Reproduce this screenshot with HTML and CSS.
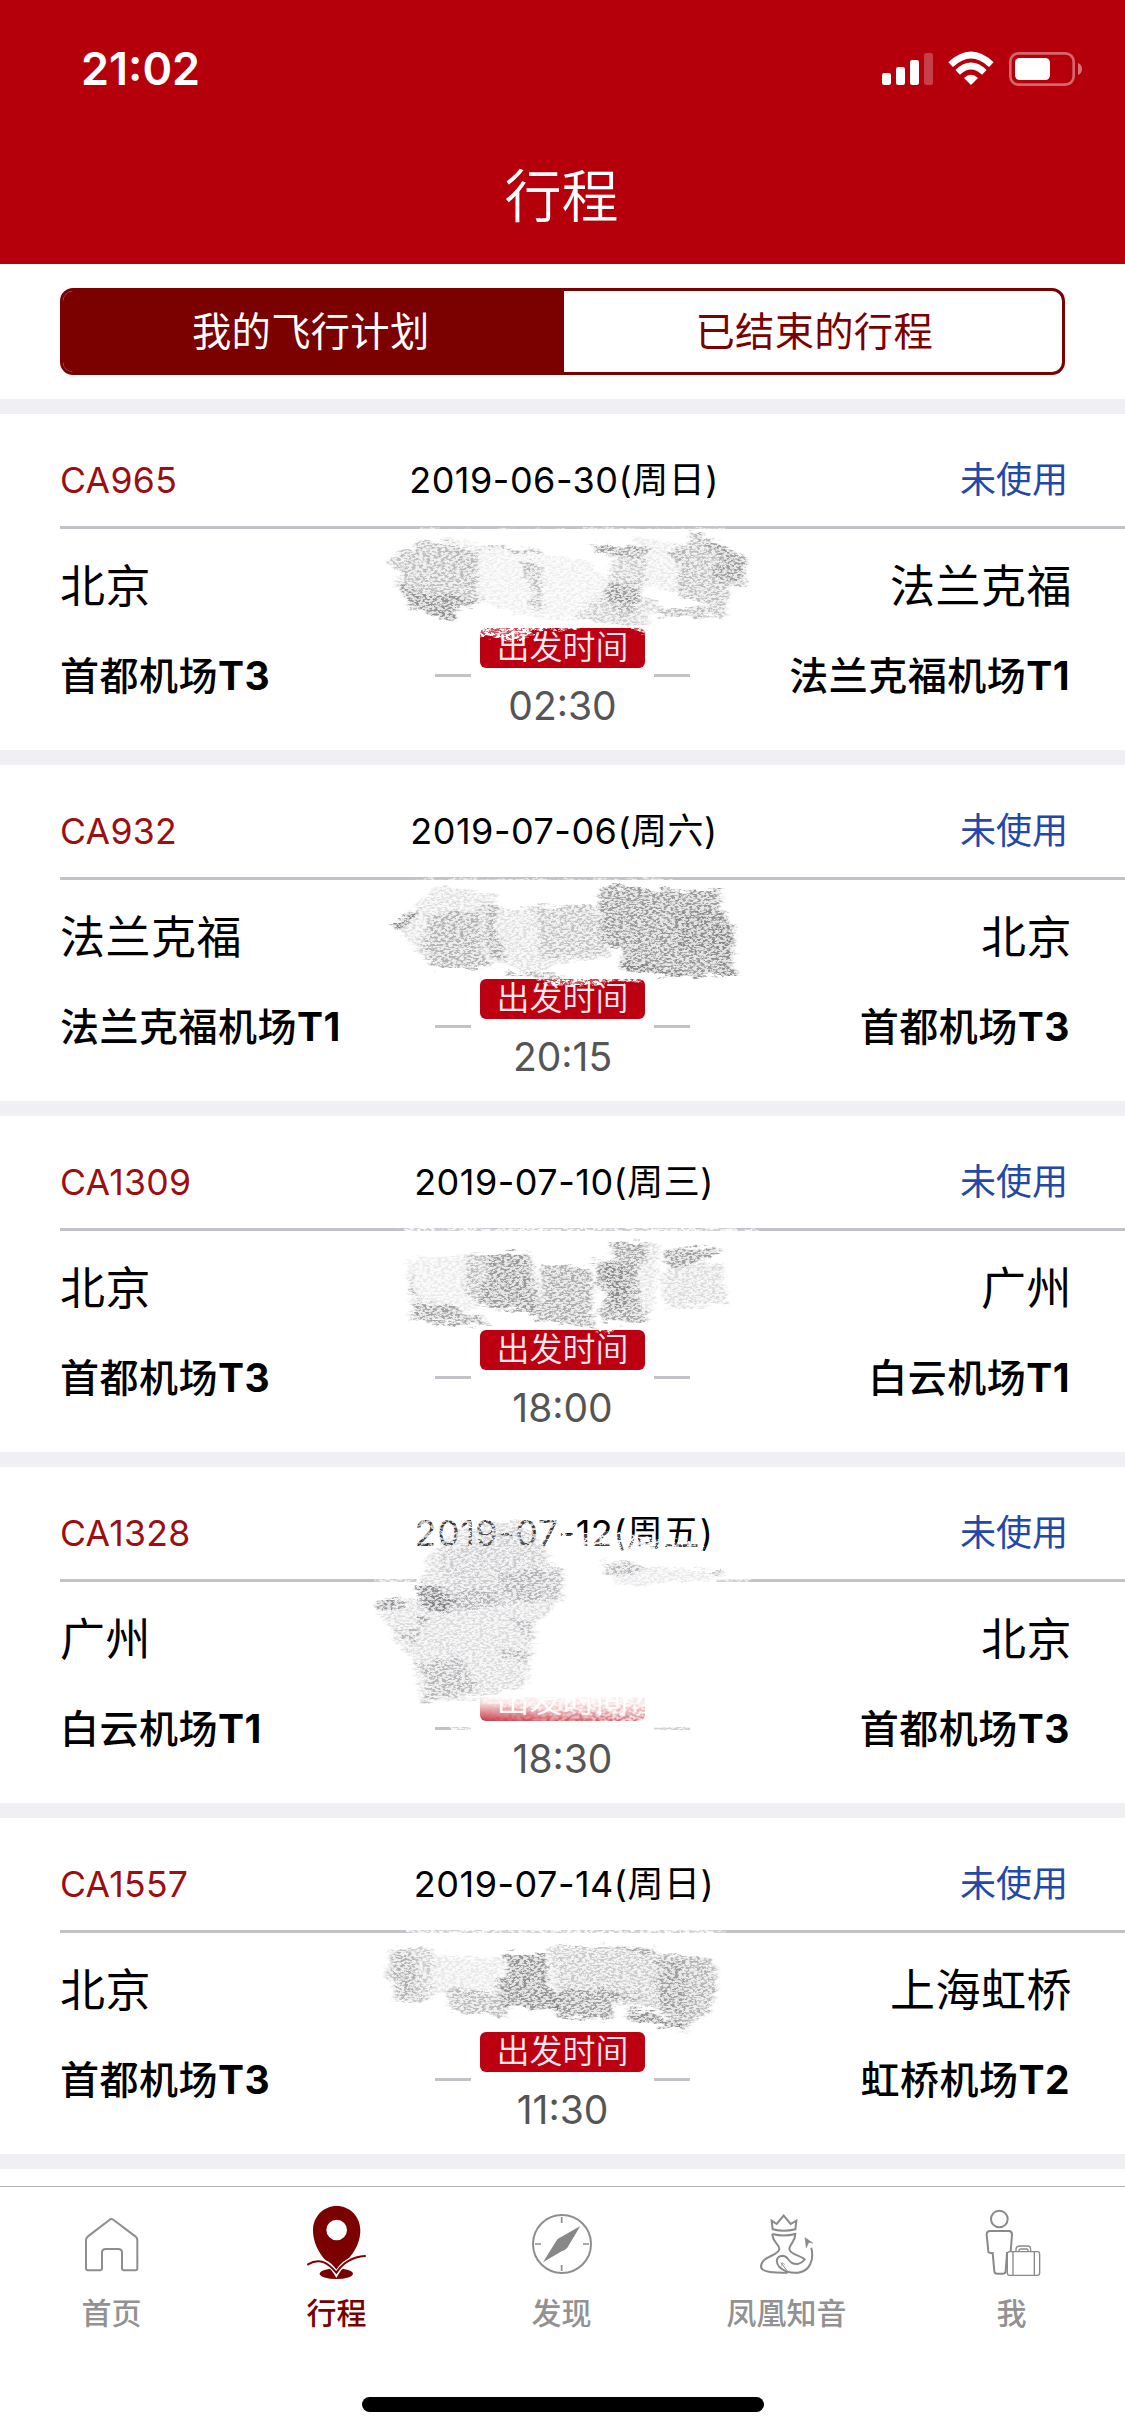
FILE: index.html
```html
<!DOCTYPE html>
<html lang="zh-CN">
<head>
<meta charset="utf-8">
<title>行程</title>
<link rel="stylesheet" href="styles.css">
</head>
<body>
<svg class="defs" width="0" height="0" aria-hidden="true">
  <defs>
    <filter id="chalk" filterUnits="userSpaceOnUse" x="0" y="0" width="1260" height="900" color-interpolation-filters="sRGB">
      <feTurbulence type="fractalNoise" baseFrequency=".02 .08" numOctaves="4" seed="4" result="wave"/>
      <feGaussianBlur in="SourceGraphic" stdDeviation="7 2" result="soft"/>
      <feDisplacementMap in="soft" in2="wave" scale="42" xChannelSelector="R" yChannelSelector="G" result="rough"/>
      <feTurbulence type="fractalNoise" baseFrequency=".09 .17" numOctaves="4" seed="9"/>
      <feColorMatrix values="0 0 0 0 0  0 0 0 0 0  0 0 0 0 0  5 0 0 0 -2.15" result="grain"/>
      <feComposite in="rough" in2="grain" operator="in" result="grained"/>
      <feComponentTransfer in="rough" result="base"><feFuncA type="linear" slope=".25"/></feComponentTransfer>
      <feMerge><feMergeNode in="base"/><feMergeNode in="grained"/></feMerge>
    </filter>
    <filter id="erase" filterUnits="userSpaceOnUse" x="0" y="0" width="1260" height="900" color-interpolation-filters="sRGB">
      <feTurbulence type="fractalNoise" baseFrequency=".04 .1" numOctaves="3" seed="7" result="wave"/>
      <feDisplacementMap in="SourceGraphic" in2="wave" scale="24" xChannelSelector="R" yChannelSelector="G" result="rough"/>
      <feTurbulence type="fractalNoise" baseFrequency=".08 .14" numOctaves="3" seed="2"/>
      <feColorMatrix values="0 0 0 0 0  0 0 0 0 0  0 0 0 0 0  6 0 0 0 -2.5" result="grain"/>
      <feComposite in="rough" in2="grain" operator="in" result="grained"/>
      <feComponentTransfer in="rough" result="base"><feFuncA type="linear" slope=".3"/></feComponentTransfer>
      <feMerge><feMergeNode in="base"/><feMergeNode in="grained"/></feMerge>
    </filter>
    <linearGradient id="fade" x1="0" y1="600" x2="0" y2="700" gradientUnits="userSpaceOnUse">
      <stop offset="0" stop-color="#fff"/><stop offset=".4" stop-color="#fff" stop-opacity=".85"/><stop offset="1" stop-color="#fff" stop-opacity=".15"/>
    </linearGradient>
    <linearGradient id="fade-x" x1="390" y1="0" x2="890" y2="0" gradientUnits="userSpaceOnUse">
      <stop offset="0" stop-color="#fff" stop-opacity="0"/><stop offset="1" stop-color="#fff" stop-opacity=".9"/>
    </linearGradient>
  </defs>
</svg>
<header class="header">
  <div class="status">
    <span class="clock">21:02</span>
    <svg class="status-icons" viewBox="0 0 690 180">
      <g fill="#fff">
        <rect x="36" y="99" width="27" height="36" rx="7"/><rect x="78" y="81" width="27" height="54" rx="7"/><rect x="120" y="60" width="27" height="75" rx="7"/>
        <rect x="162" y="39" width="27" height="96" rx="7" opacity=".25"/>
        <path d="M303 135L282 114Q303 95 324 114Z"/>
      </g>
      <g fill="none" stroke="#fff" stroke-width="20">
        <path d="M242 74Q303 16 364 74"/><path d="M263 97Q303 59 343 97"/>
      </g>
      <rect x="421" y="40" width="190" height="94" rx="25" fill="none" stroke="#fff" stroke-opacity=".4" stroke-width="8"/>
      <rect x="435" y="54" width="105" height="66" rx="14" fill="#fff"/>
      <path d="M624 69Q636 74 636 87T624 105Z" fill="#fff" opacity=".45"/>
    </svg>
  </div>
  <h1 class="title">行程</h1>
</header>
<div class="switch-bar">
  <div class="switch"><span class="switch-item switch-on">我的飞行计划</span><span class="switch-item">已结束的行程</span></div>
</div>
<main class="trips">
  <section class="trip">
    <div class="trip-head"><span class="flight">CA965</span><span class="date">2019-06-30(周日)</span><span class="state">未使用</span></div>
    <div class="trip-body">
      <div class="place"><span class="city">北京</span><span class="airport">首都机场<b>T3</b></span></div>
      <div class="depart"><span class="tag">出发时间</span><div class="dashes"><i></i><i></i></div><span class="time">02:30</span></div>
      <div class="place place-end"><span class="city">法兰克福</span><span class="airport">法兰克福机场<b>T1</b></span></div>
    </div>
    <svg class="scribble scribble-1" viewBox="0 0 1260 720">
      <g filter="url(#erase)" fill="#fff">
        <path opacity=".6" d="M180 84L340 90 460 86 660 90 690 80 860 90 1090 80V100H180Z"/>
        <path d="M350 376L660 376 655 386 510 392 520 408 460 424 350 404Z"/><path d="M760 372L855 376V400L800 384Z"/>
      </g>
      <g filter="url(#chalk)" fill="#777">
        <path opacity=".42" d="M84 178L200 120 355 150 350 215 355 300 290 312 285 365 155 320 110 262 125 225Z"/>
        <path opacity=".55" d="M105 250L180 275 290 285 370 305 285 325 280 365 150 322Z"/>
        <path opacity=".4" d="M380 132L550 155 540 168 380 145ZM480 188L540 190 545 325 505 318 520 280Z"/>
        <path opacity=".1" d="M240 110L700 190 850 380 520 350 360 310Z"/>
        <path opacity=".34" d="M685 132L855 142 860 240 800 360 730 290 760 175Z"/>
        <path opacity=".5" d="M690 130L860 142 855 166 720 160ZM748 250L820 245 840 305 755 305Z"/>
        <path opacity=".25" d="M640 350L740 270 840 290 900 310 860 375 800 378Z"/>
        <path opacity=".42" d="M990 92L1160 172 1148 255 1110 262 1092 350 900 350 885 325 1060 320 950 280 960 200 920 155 980 135Z"/>
        <path opacity=".45" d="M990 92L1160 172 1148 255 1060 235 1080 170Z"/>
        <path opacity=".12" d="M820 110L990 140 960 280 860 260Z"/>
      </g>
    </svg>
  </section>
  <section class="trip">
    <div class="trip-head"><span class="flight">CA932</span><span class="date">2019-07-06(周六)</span><span class="state">未使用</span></div>
    <div class="trip-body">
      <div class="place"><span class="city">法兰克福</span><span class="airport">法兰克福机场<b>T1</b></span></div>
      <div class="depart"><span class="tag">出发时间</span><div class="dashes"><i></i><i></i></div><span class="time">20:15</span></div>
      <div class="place place-end"><span class="city">北京</span><span class="airport">首都机场<b>T3</b></span></div>
    </div>
    <svg class="scribble scribble-2" viewBox="0 0 1260 720">
      <g filter="url(#erase)" fill="#fff">
        <path opacity=".6" d="M160 62L200 54 600 58 900 54 960 70H160Z"/>
        <path d="M510 350L855 352 850 366 760 362 690 378 560 372Z"/>
      </g>
      <g filter="url(#chalk)" fill="#777">
        <path opacity=".2" d="M104 195L240 78 415 105 400 145 700 135 760 290 600 310 520 345 420 300 380 325 215 322Z"/>
        <path opacity=".9" d="M102 200L165 145 170 165 120 212Z"/>
        <path opacity=".38" d="M210 160L360 150 370 300 400 325 220 322 190 270Z"/>
        <path opacity=".5" d="M380 125L410 128 400 210 425 235 435 300 395 295 375 225ZM435 332L620 344 610 356 440 344Z"/>
        <path opacity=".25" d="M510 138L700 132 740 280 540 300 530 180Z"/>
        <path opacity=".7" d="M715 95L750 75 930 92 1085 88 1080 150 1110 180 1130 240 1110 290 1130 345 970 350 790 325 790 270 730 255Z"/>
        <path opacity=".4" d="M950 155L1080 155 1125 240 1110 340 1060 290 950 270Z"/>
        <path opacity=".6" d="M785 300L970 340 970 356 790 332ZM1070 210L1130 240 1090 260ZM1070 320L1135 345 1080 348Z"/>
      </g>
    </svg>
  </section>
  <section class="trip">
    <div class="trip-head"><span class="flight">CA1309</span><span class="date">2019-07-10(周三)</span><span class="state">未使用</span></div>
    <div class="trip-body">
      <div class="place"><span class="city">北京</span><span class="airport">首都机场<b>T3</b></span></div>
      <div class="depart"><span class="tag">出发时间</span><div class="dashes"><i></i><i></i></div><span class="time">18:00</span></div>
      <div class="place place-end"><span class="city">广州</span><span class="airport">白云机场<b>T1</b></span></div>
    </div>
    <svg class="scribble scribble-3" viewBox="0 0 1260 720">
      <g filter="url(#erase)" fill="#fff">
        <path opacity=".85" d="M120 50L400 54 1040 52 1200 58V72H150Z"/><path d="M680 354L760 352V370L720 364Z"/>
      </g>
      <g filter="url(#chalk)" fill="#777">
        <path opacity=".12" d="M140 150L330 130 360 290 160 320Z"/>
        <path opacity=".6" d="M150 180L160 230 180 265 150 255ZM150 272L260 285 370 325 390 348 180 334 145 315 180 305Z"/>
        <path opacity=".4" d="M325 135L500 125 540 240 530 310 360 290 310 230Z"/>
        <path opacity=".5" d="M375 130L500 130 520 250 540 312 370 290 360 220 390 205Z"/>
        <path opacity=".55" d="M540 165L690 175 700 240 690 310 712 352 525 330 550 250Z"/>
        <path opacity=".6" d="M750 95L860 100 855 140 830 180 840 270 860 338 740 335 710 310 740 260 705 220 720 180 695 150 770 155Z"/>
        <path opacity=".55" d="M700 155L810 165 810 290 760 298 750 240Z"/>
        <path opacity=".18" d="M820 95L900 105 880 300 860 320Z"/>
        <path opacity=".65" d="M910 118L1045 112 1090 128 1000 162 930 176Z"/>
        <path opacity=".22" d="M920 172L1085 160 1105 285 920 290 900 210Z"/>
      </g>
    </svg>
  </section>
  <section class="trip">
    <div class="trip-head"><span class="flight">CA1328</span><span class="date">2019-07-12(周五)</span><span class="state">未使用</span></div>
    <div class="trip-body">
      <div class="place"><span class="city">广州</span><span class="airport">白云机场<b>T1</b></span></div>
      <div class="depart"><span class="tag">出发时间</span><div class="dashes"><i></i><i></i></div><span class="time">18:30</span></div>
      <div class="place place-end"><span class="city">北京</span><span class="airport">首都机场<b>T3</b></span></div>
    </div>
    <svg class="scribble scribble-4" viewBox="0 0 1260 900">
      <path d="M200 240H1100V450L900 622H380L200 600Z" fill="#fff"/>
      <g filter="url(#erase)" fill="#fff">
        <path opacity=".75" d="M185 75L640 75 650 190H180Z"/>
        <path opacity=".9" d="M310 110L500 85 560 150 650 130 830 130 1060 165 1060 200 290 200Z"/>
        <path d="M70 262H200V290H70ZM1100 260H1200V280H1100Z" opacity=".7"/>
        <path d="M300 706H370V730H300ZM900 700H1030V730H900Z" opacity=".8"/>
      </g>
      <path d="M380 572H900V700H380Z" fill="url(#fade)"/>
      <g filter="url(#erase)">
        <path d="M370 560H910V674L640 668 400 640Z" fill="#fff" opacity=".7"/>
        <path d="M370 600H930V710H370Z" fill="url(#fade-x)"/>
      </g>
      <g filter="url(#chalk)" fill="#77777c">
        <path opacity=".22" d="M320 115L500 90 590 160 590 220 640 240 640 330 560 400 530 590 400 620 215 640 190 500 130 450 80 345 200 320 230 210Z"/>
        <path opacity=".13" d="M270 190L500 110 600 190 560 330 300 370Z"/>
        <path opacity=".75" d="M78 335L150 320 160 345 110 366ZM190 280L250 285 310 335 280 375 220 345ZM205 375L232 388 215 408Z"/>
        <path opacity=".28" d="M445 250L635 235 630 320 540 340 460 310ZM225 300L450 300 440 350 230 370Z"/>
        <path opacity=".32" d="M440 480L530 485 530 515 450 495ZM190 520L330 500 380 600 215 635 240 590ZM480 380L545 400 535 450ZM130 420L220 420 180 460Z"/>
        <path opacity=".36" d="M755 210L890 225 880 250 770 255ZM1080 240L1130 240 1110 266Z"/>
        <path opacity=".14" d="M780 225L1100 240 1080 270 800 290Z"/>
      </g>
    </svg>
  </section>
  <section class="trip">
    <div class="trip-head"><span class="flight">CA1557</span><span class="date">2019-07-14(周日)</span><span class="state">未使用</span></div>
    <div class="trip-body">
      <div class="place"><span class="city">北京</span><span class="airport">首都机场<b>T3</b></span></div>
      <div class="depart"><span class="tag">出发时间</span><div class="dashes"><i></i><i></i></div><span class="time">11:30</span></div>
      <div class="place place-end"><span class="city">上海虹桥</span><span class="airport">虹桥机场<b>T2</b></span></div>
    </div>
    <svg class="scribble scribble-5" viewBox="0 0 1260 780">
      <g filter="url(#erase)" fill="#fff"><path opacity=".85" d="M135 58L1090 58 1100 76H150Z"/></g>
      <g filter="url(#chalk)" fill="#777">
        <path opacity=".34" d="M95 118L220 112 210 270 95 280 110 230 78 200Z"/>
        <path opacity=".3" d="M100 125L155 130 180 260 110 270Z"/>
        <path opacity=".14" d="M215 130L430 150 420 240 210 250Z"/>
        <path opacity=".45" d="M262 235L430 250 445 325 270 298ZM290 338L400 312 330 328Z"/>
        <path opacity=".75" d="M430 132L560 135 570 225 600 260 605 300 430 290 412 215 445 200Z"/>
        <path opacity=".34" d="M565 110L880 115 890 290 770 285 760 330 585 322 590 230Z"/>
        <path opacity=".5" d="M610 98L685 108 660 115ZM590 240L750 235 860 262 750 275 765 325 585 322ZM710 102L880 120 870 135Z"/>
        <path opacity=".5" d="M885 132L1055 145 1072 215 1050 305 985 345 985 375 940 330 890 300Z"/>
        <path opacity=".35" d="M895 150L970 150 980 320 900 290Z"/>
        <path opacity=".75" d="M805 295L870 308 975 345 975 362 805 332Z"/>
      </g>
    </svg>
  </section>
</main>
<nav class="tabs">
  <div class="tab">
    <svg class="tab-icon" viewBox="0 0 270 255"><path d="M127 60Q133 54 140 60L205 109Q211 114 211 121V205Q211 211 205 211H171Q165 211 165 205V158Q165 147 154 147H116Q105 147 105 158V205Q105 211 99 211H63Q57 211 57 205V121Q57 114 63 109Z" fill="none" stroke="#8e8e8e" stroke-width="6"/></svg>
    <span class="tab-name">首页</span>
  </div>
  <div class="tab tab-on">
    <svg class="tab-icon" viewBox="0 0 270 255">
      <ellipse cx="133" cy="221" rx="50" ry="16" fill="#7b0000"/>
      <path fill-rule="evenodd" d="M134 18C94 18 63 50 63 91C63 143 98 184 133 212C169 182 205 143 205 91C205 50 174 18 134 18ZM134 59A31 31 0 1 1 134 121A31 31 0 1 1 134 59Z" fill="#7b0000"/>
      <path d="M46 193C82 170 112 185 133 221C150 190 178 171 221 168" fill="none" stroke="#fff" stroke-width="13"/>
      <path d="M48 193C82 172 108 188 133 218C152 189 178 171 219 168" fill="none" stroke="#7b0000" stroke-width="6" stroke-linecap="round"/>
    </svg>
    <span class="tab-name">行程</span>
  </div>
  <div class="tab">
    <svg class="tab-icon" viewBox="0 0 270 255"><circle cx="135" cy="132" r="87" fill="none" stroke="#8e8e8e" stroke-width="6"/><path d="M134 51V69M134 195V213M54 132H72M198 132H216" stroke="#8e8e8e" stroke-width="5"/><path d="M190 78L151 143Q144 151 134 154L78 187 118 122Q123 115 131 112Z" fill="#888"/></svg>
    <span class="tab-name">发现</span>
  </div>
  <div class="tab">
    <svg class="tab-icon" viewBox="0 0 270 255">
      <g transform="translate(24 -15)" fill="none" stroke="#8a8a8a" stroke-width="6">
        <path d="M65 77L80 87 101 62 122 87 139 77 136 103Q101 112 68 103Z"/>
        <path d="M67 117Q101 126 136 117C136 142 118 146 118 162C119 178 150 180 164 193C153 208 137 209 126 204C112 196 113 182 98 182C78 183 76 201 88 216C102 229 119 235 144 233M67 117C67 142 88 146 88 162C86 184 34 182 33 215C34 233 76 233 113 233M144 233C178 230 193 196 184 158"/>
        <path d="M93 203L111 227" stroke-width="3"/><path d="M95 214L96 203 105 209" stroke-width="2"/>
        <path d="M165 128L188 144 176 142 169 158Z" fill="#8a8a8a" stroke="#8a8a8a" stroke-width="2"/>
      </g>
    </svg>
    <span class="tab-name">凤凰知音</span>
  </div>
  <div class="tab">
    <svg class="tab-icon" viewBox="0 0 270 255">
      <g transform="translate(-650 -15)" fill="none" stroke="#8a8a8a" stroke-width="6">
        <circle cx="747" cy="72" r="25"/>
        <path d="M719 108H776Q785 108 785 119L781 170Q780 174 770 174L766 229Q766 236 758 236H740Q733 236 732 229L727 174Q715 174 714 170L709 119Q709 108 719 108Z"/>
        <g stroke-width="4"><rect x="771" y="170" width="97" height="71" rx="7" fill="#fff"/><path d="M788 170V241M852 170V241M797 170V164Q797 153 808 153H832Q841 153 841 164V170M806 170Q805 162 812 162H828Q834 162 833 170"/></g>
      </g>
    </svg>
    <span class="tab-name">我</span>
  </div>
  <div class="home-bar"></div>
</nav>
</body>
</html>
```
FILE: styles.css
```css
* { box-sizing: border-box; }
body {
  margin: 0;
  width: 1125px;
  height: 2436px;
  display: flex;
  flex-direction: column;
  overflow: hidden;
  background: #fff;
  color: #000;
  font-family: Inter, "Noto Sans CJK SC", sans-serif;
}
.defs { position: absolute; }
.header { flex: none; height: 264px; background: #b5000c; color: #fff; }
.status { display: flex; justify-content: space-between; padding: 40px 25px 0 81px; height: 132px; }
.clock { font-size: 45px; font-weight: 600; line-height: 58px; }
.status-icons { width: 230px; height: 60px; }
.title { margin: 0; padding-right: 2px; font-size: 57px; font-weight: 350; line-height: 130px; text-align: center; }
.switch-bar { flex: none; height: 135px; padding: 24px 60px; }
.switch {
  display: flex;
  height: 87px;
  border: 3px solid #7b0000;
  border-radius: 13px;
  overflow: hidden;
}
.switch-item { flex: 1; padding-left: 3px; color: #7b0000; font-size: 39.3px; letter-spacing: .3px; line-height: 81px; text-align: center; }
.switch-on { padding: 0 5px 0 0; background: #7b0000; color: #fff; }
.trips {
  flex: 1;
  min-height: 0;
  display: flex;
  flex-direction: column;
  gap: 15px;
  padding-top: 15px;
  overflow: hidden;
  background: linear-gradient(#efeff4 1770px, #fff 1770px);
}
.trip { position: relative; flex: none; height: 336px; background: #fff; }
.trip-head {
  display: grid;
  grid-template-columns: 1fr auto 1fr;
  height: 115px;
  margin-left: 60px;
  padding: 21px 57px 0 0;
  border-bottom: 3px solid #c3c2c9;
  font-size: 36px;
  line-height: 91px;
}
.flight { color: #9b0f12; font-size: 35.6px; letter-spacing: .3px; }
.date { letter-spacing: .5px; }
.state { color: #2448a8; text-align: right; }
.trip-body { display: grid; grid-template-columns: 1fr 255px 1fr; }
.place { display: flex; flex-direction: column; padding: 33px 0 0 60px; }
.place-end { align-items: flex-end; padding: 33px 53px 0 0; }
.city { font-size: 45px; letter-spacing: .5px; line-height: 50px; }
.airport { margin-top: 41px; font-size: 39px; font-weight: 500; letter-spacing: .5px; line-height: 46px; white-space: nowrap; }
.airport b { font-weight: 700; }
.place-end .airport { margin-right: 2px; }
.depart { display: flex; flex-direction: column; align-items: center; padding-top: 99px; }
.tag {
  width: 165px;
  height: 40px;
  border-radius: 6px;
  background: #bc0012;
  color: #fbeaf0;
  font-size: 33px;
  font-weight: 350;
  line-height: 39px;
  text-align: center;
}
.dashes { display: flex; justify-content: space-between; width: 255px; height: 3px; margin-top: 6px; }
.dashes i { width: 36px; background: #c3c2c9; }
.time { margin-top: 6px; color: #555; font-size: 39px; line-height: 46px; }
.scribble { position: absolute; left: 360px; width: 420px; }
.scribble-1 { top: 86px; }
.scribble-2 { top: 95px; }
.scribble-3 { top: 94px; }
.scribble-4 { top: 23px; left: 350px; }
.scribble-5 { top: 92px; }
.tabs {
  flex: none;
  display: grid;
  grid-template-columns: repeat(5, 1fr);
  grid-template-rows: 210px 15px;
  height: 250px;
  border-top: 1px solid #b2b2b2;
  background: #fff;
}
.tab { display: flex; flex-direction: column; align-items: center; padding: 13px 2px 0 0; color: #929292; }
.tab-icon { width: 90px; height: 85px; }
.tab-name { margin-top: 8px; font-size: 30px; font-weight: 500; line-height: 40px; }
.tab-on { color: #7b0000; }
.home-bar { grid-column: 1 / -1; justify-self: center; width: 402px; height: 15px; border-radius: 8px; background: #000; }
```
